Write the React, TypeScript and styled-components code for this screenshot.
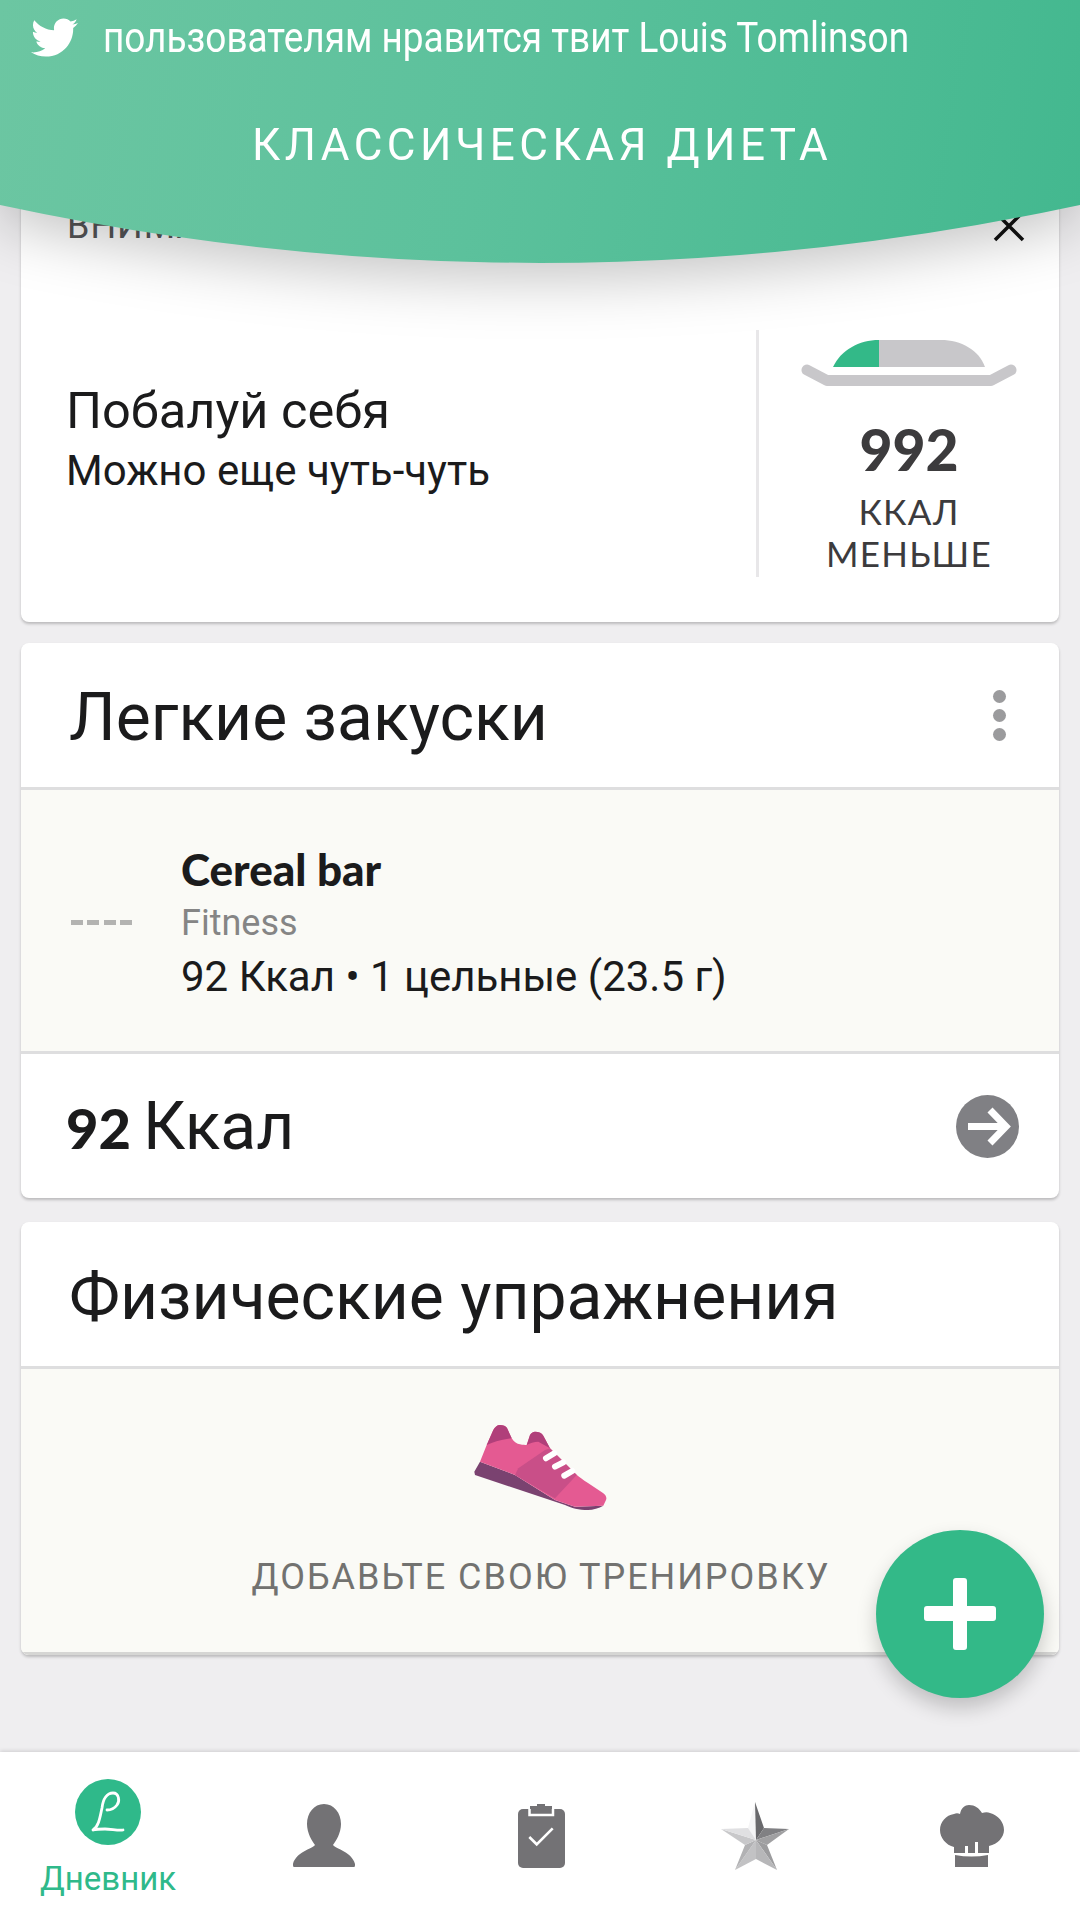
import React from "react";
import styled, { createGlobalStyle } from "styled-components";
import { FaTwitter } from "react-icons/fa";

const Global = createGlobalStyle`
  html, body { margin: 0; padding: 0; background: #efeef0; }
  * { box-sizing: border-box; }
`;

const Page = styled.div`
  position: relative;
  width: 1080px;
  height: 1920px;
  overflow: hidden;
  display: flex;
  flex-direction: column;
  background: #efeef0;
  font-family: Roboto, "Liberation Sans", sans-serif;
  color: #1b1b1c;
`;

const Content = styled.main`
  flex: 1;
  display: flex;
  flex-direction: column;
  gap: 21px;
  padding: 180px 21px 0;
`;

const Card = styled.section`
  border-radius: 8px;
  background: #fff;
  box-shadow: 0 2px 3px rgba(0, 0, 0, 0.22);
  overflow: hidden;
`;

const SummaryCard = styled(Card)`
  height: 442px;
`;

const Notice = styled.div`
  height: 92px;
  margin-bottom: 58px;
  padding: 0 33px 0 46px;
  display: flex;
  align-items: center;
  justify-content: space-between;
  font-size: 36px;
  letter-spacing: 1px;
  color: #555557;
`;

const Summary = styled.div`
  height: 247px;
  display: flex;
`;

const SummaryText = styled.div`
  flex: 1;
  padding: 0 0 28px 45px;
  display: flex;
  flex-direction: column;
  justify-content: center;
`;

const SummaryTitle = styled.div`
  font-size: 50.5px;
  line-height: 62px;
`;

const SummarySub = styled.div`
  font-size: 42px;
  line-height: 58px;
`;

const Remaining = styled.div`
  width: 303px;
  border-left: 3px solid #e8e7e9;
  display: flex;
  flex-direction: column;
  align-items: center;
  color: #3c3b3d;
`;

const Plate = styled.svg`
  margin-top: 10px;
  width: 216px;
  height: 46px;
`;

const Remain = styled.div`
  margin-top: 30px;
  font-family: Lato, sans-serif;
  font-weight: 900;
  font-size: 57px;
  line-height: 66px;
`;

const RemainLabel = styled.div`
  margin-top: 8px;
  font-family: Lato, sans-serif;
  font-size: 35px;
  line-height: 42px;
  letter-spacing: 1.2px;
  text-align: center;
`;

const CardHeader = styled.header`
  height: 144px;
  padding: 4px 27px 0 48px;
  display: flex;
  align-items: center;
  justify-content: space-between;
  font-size: 66px;
`;

const Dots = styled.div`
  display: flex;
  flex-direction: column;
  gap: 6px;
  margin: 0 26px 4px 0;
  span {
    width: 13px;
    height: 13px;
    border-radius: 50%;
    background: #9b9b9d;
  }
`;

const Cream = styled.div`
  border-top: 3px solid #dededf;
  background: #fafaf6;
`;

const MealRow = styled(Cream)`
  height: 267px;
  border-bottom: 3px solid #dededf;
  padding: 4px 0 0 50px;
  display: flex;
  align-items: center;
`;

const Dash = styled.div`
  width: 61px;
  height: 5px;
  margin-right: 49px;
  background: repeating-linear-gradient(90deg, #b3b3b1 0 12px, transparent 12px 16.3px);
`;

const MealInfo = styled.div`
  display: flex;
  flex-direction: column;
`;

const MealName = styled.div`
  font-family: Lato, sans-serif;
  font-weight: 900;
  font-size: 44px;
  line-height: 54px;
`;

const MealBrand = styled.div`
  font-size: 36px;
  line-height: 54px;
  color: #858585;
`;

const MealMeta = styled.div`
  font-size: 42px;
  line-height: 54px;
`;

const Total = styled.div`
  height: 144px;
  padding: 0 40px 0 45px;
  display: flex;
  align-items: center;
  justify-content: space-between;
  font-size: 66px;
`;

const TotalNum = styled.b`
  font-family: Lato, sans-serif;
  font-weight: 900;
  font-size: 56px;
  margin-right: 12px;
`;

const Arrow = styled.svg`
  width: 63px;
  height: 63px;
`;

const WorkoutCard = styled(Card)`
  margin-top: 3px;
  height: 433px;
  display: flex;
  flex-direction: column;
`;

const EmptyWorkout = styled(Cream)`
  flex: 1;
  display: flex;
  flex-direction: column;
  align-items: center;
  padding-top: 56px;
  border-bottom: 3px solid #d6d6d4;
`;

const Shoe = styled.svg`
  width: 134px;
  height: 86px;
`;

const EmptyLabel = styled.div`
  margin-top: 45px;
  padding-left: 2px;
  font-size: 36px;
  letter-spacing: 1.97px;
  color: #727270;
`;

const Header = styled.div`
  position: absolute;
  left: 0;
  top: 0;
  width: 1080px;
  height: 264px;
  filter: drop-shadow(0 14px 30px rgba(0, 0, 0, 0.24));
`;

const HeaderShape = styled.div`
  width: 100%;
  height: 100%;
  clip-path: path("M0 0H1080V205Q540 321 0 205Z");
  background: linear-gradient(100deg, #6cc6a2 0%, #5cc19c 45%, #43b88f 100%);
  color: #fff;
  display: flex;
  flex-direction: column;
`;

const Toast = styled.div`
  height: 74px;
  padding-left: 31px;
  display: flex;
  align-items: center;
  svg {
    width: 47px;
    height: 47px;
    flex-shrink: 0;
  }
`;

const ToastText = styled.span`
  margin-left: 25px;
  font-size: 42px;
  font-weight: 400;
  white-space: nowrap;
  transform: scaleX(0.88);
  transform-origin: left center;
`;

const HeaderTitle = styled.div`
  margin-top: 43px;
  padding-left: 4px;
  text-align: center;
  font-size: 44px;
  font-weight: 400;
  letter-spacing: 4.5px;
  line-height: 56px;
`;

const Fab = styled.button`
  position: absolute;
  left: 876px;
  top: 1530px;
  width: 168px;
  height: 168px;
  padding: 0;
  border: 0;
  border-radius: 50%;
  background: #33b988;
  box-shadow: 0 10px 20px rgba(0, 0, 0, 0.2);
  display: flex;
  align-items: center;
  justify-content: center;
`;

const Nav = styled.nav`
  height: 168px;
  background: #fff;
  box-shadow: 0 -1px 4px rgba(0, 0, 0, 0.14);
  display: grid;
  grid-template-columns: repeat(5, 216px);
`;

const NavItem = styled.div`
  display: flex;
  flex-direction: column;
  align-items: center;
  justify-content: center;
  svg { display: block; }
`;

const LogoItem = styled(NavItem)`
  justify-content: flex-start;
  padding-top: 27px;
`;

const NavLabel = styled.div`
  margin-top: 14px;
  font-size: 33px;
  line-height: 40px;
  color: #2fb98a;
`;

const ICON = "#737275";

export default function App() {
  return (
    <Page>
      <Global />
      <Content>
        <SummaryCard>
          <Notice>
            <span>ВНИМАНИЕ</span>
            <svg width="34" height="34" viewBox="0 0 34 34"><path d="M3 3 31 31M31 3 3 31" stroke="#111" strokeWidth="3.5" /></svg>
          </Notice>
          <Summary>
            <SummaryText>
              <SummaryTitle>Побалуй себя</SummaryTitle>
              <SummarySub>Можно еще чуть-чуть</SummarySub>
            </SummaryText>
            <Remaining>
              <Plate viewBox="0 0 216 46">
                <path d="M32 27C40 10 58 0 78 0V27Z" fill="#33b988" />
                <path d="M78 0H140C160 0 178 10 184 27H78Z" fill="#c8c7ca" />
                <path d="M6 30 26 40.5H190L210 30" fill="none" stroke="#c8c7ca" strokeWidth="11" strokeLinecap="round" strokeLinejoin="round" />
              </Plate>
              <Remain>992</Remain>
              <RemainLabel>ККАЛ<br />МЕНЬШЕ</RemainLabel>
            </Remaining>
          </Summary>
        </SummaryCard>

        <Card>
          <CardHeader>
            <span>Легкие закуски</span>
            <Dots><span /><span /><span /></Dots>
          </CardHeader>
          <MealRow>
            <Dash />
            <MealInfo>
              <MealName>Cereal bar</MealName>
              <MealBrand>Fitness</MealBrand>
              <MealMeta>92 Ккал • 1 цельные (23.5 г)</MealMeta>
            </MealInfo>
          </MealRow>
          <Total>
            <span><TotalNum>92</TotalNum>Ккал</span>
            <Arrow viewBox="0 0 63 63">
              <circle cx="31.5" cy="31.5" r="31.5" fill="#808084" />
              <path d="M12 31.5H49M34 15 50 31.5 34 48" fill="none" stroke="#fff" strokeWidth="7" />
            </Arrow>
          </Total>
        </Card>

        <WorkoutCard>
          <CardHeader>Физические упражнения</CardHeader>
          <EmptyWorkout>
            <Shoe viewBox="0 0 134 86">
              <path d="M1.3 46.7 7 36.7 42 50 82 75 102 81.7 130.3 80.7C126 83 120 85 115 85 106 85 98 83 92 80L2 50Z" fill="#7a4270" />
              <path d="M7 36.7 13.7 20 20.3 5C22 2 24 0 27 0 30 0 33 1 34 3L38.7 13.3C41 17 44 19 47 19.3 50 20 52 20 53.7 20L57 10C58 8 60 6.7 62 6.7 66 6.7 69 8 70.3 10.7L77 23.3 102 48.3C106 52 110 55 115 58L130 68C133 70 134 73 133 75L130.3 80.7 102 81.7 82 75 42 50Z" fill="#e45a92" />
              <path d="M45.3 43.3 72 25 77 23.3 102 48.3 103.7 50 82 73.3 42 50Z" fill="#c94f88" />
              <path d="M13.7 20 20.3 5C22 2 24 0 27 0 30 0 33 1 34 3L38.7 13.3 33.7 14C27 15 20 17 13.7 20ZM53.7 20 57 10C58 8 60 6.7 62 6.7 66 6.7 69 8 70.3 10.7L77 23.3 65.3 16.7C61 17 57 18 53.7 20Z" fill="#b03f7a" />
              <path d="M73 33.3 81.3 28.3M82 41.7 90.3 37.3M91.3 50.7 99.3 46" stroke="#fff" strokeWidth="6" strokeLinecap="round" />
            </Shoe>
            <EmptyLabel>ДОБАВЬТЕ СВОЮ ТРЕНИРОВКУ</EmptyLabel>
          </EmptyWorkout>
        </WorkoutCard>
      </Content>

      <Nav>
        <LogoItem>
          <svg width="66" height="66" viewBox="0 0 66 66">
            <circle cx="33" cy="33" r="33" fill="#2fb98a" />
            <path d="M18 51C22 50 24 50 30 50 36 50 44 52 48 51M18 51C24 47 25 38 27 29 28 20 32 14 38 14 44 14 45 22 42 26 39 30 35 31 32 31" fill="none" stroke="#fff" strokeWidth="2.8" strokeLinecap="round" />
          </svg>
          <NavLabel>Дневник</NavLabel>
        </LogoItem>
        <NavItem>
          <svg width="64" height="64" viewBox="0 0 64 64">
            <path d="M32 0C42 0 49 9 49 20 49 29 44 37 41 41 44 45 60 48 63 60 63 62 63 63 62 63H2C1 63 1 62 1 60 4 48 20 45 23 41 20 37 15 29 15 20 15 9 22 0 32 0Z" fill={ICON} />
          </svg>
        </NavItem>
        <NavItem>
          <svg width="50" height="64" viewBox="-3 0 50 64">
            <rect y="5" width="47" height="59" rx="5" fill={ICON} />
            <path d="M12 2H19V0H27V2H34V9H12Z" fill={ICON} />
            <path d="M11.5 5V11H35V5" fill="none" stroke="#fff" strokeWidth="2.5" />
            <path d="M11.3 33 18.7 40.3 34.7 24.3" fill="none" stroke="#fff" strokeWidth="2.6" />
          </svg>
        </NavItem>
        <NavItem>
          <svg width="70" height="68" viewBox="0 0 70 68">
            <path d="M34 0 27 26 35 38Z" fill="#f5f5f6" />
            <path d="M34 0 43 26 35 38Z" fill="#69696c" />
            <path d="M43 26 68 27 35 38Z" fill="#808083" />
            <path d="M68 27 46 43 35 38Z" fill="#a0a0a2" />
            <path d="M46 43 56 68 35 38Z" fill="#9c9c9e" />
            <path d="M56 68 35 57 35 38Z" fill="#b7b7b9" />
            <path d="M35 57 14 68 35 38Z" fill="#c2c2c4" />
            <path d="M14 68 24 43 35 38Z" fill="#b2b2b4" />
            <path d="M24 43 0 27 35 38Z" fill="#c8c8ca" />
            <path d="M0 27 27 26 35 38Z" fill="#e0e0e2" />
          </svg>
        </NavItem>
        <NavItem>
          <svg width="64" height="62" viewBox="0 0 64 62">
            <path d="M29 0C35 0 39 3 42 8 45 7 48 7 50 8 58 10 64 17 64 25 64 32 58 39 49 41V48H38V37H35V48H28V41H25V48H14V42C6 40 0 33 0 25 0 17 6 10 14 9 16 8 18 8 20 9 21 3 25 0 29 0Z" fill={ICON} />
            <path d="M15 50C26 52 37 52 48 50V62H15Z" fill={ICON} />
          </svg>
        </NavItem>
      </Nav>

      <Header>
        <HeaderShape>
          <Toast>
            <FaTwitter />
            <ToastText>пользователям нравится твит Louis Tomlinson</ToastText>
          </Toast>
          <HeaderTitle>КЛАССИЧЕСКАЯ ДИЕТА</HeaderTitle>
        </HeaderShape>
      </Header>

      <Fab aria-label="add">
        <svg width="72" height="72" viewBox="0 0 72 72">
          <path d="M29 3a3 3 0 0 1 3-3h8a3 3 0 0 1 3 3v25h26a3 3 0 0 1 3 3v9a3 3 0 0 1-3 3H43v26a3 3 0 0 1-3 3h-8a3 3 0 0 1-3-3V43H3a3 3 0 0 1-3-3v-9a3 3 0 0 1 3-3h26Z" fill="#fff" />
        </svg>
      </Fab>
    </Page>
  );
}
